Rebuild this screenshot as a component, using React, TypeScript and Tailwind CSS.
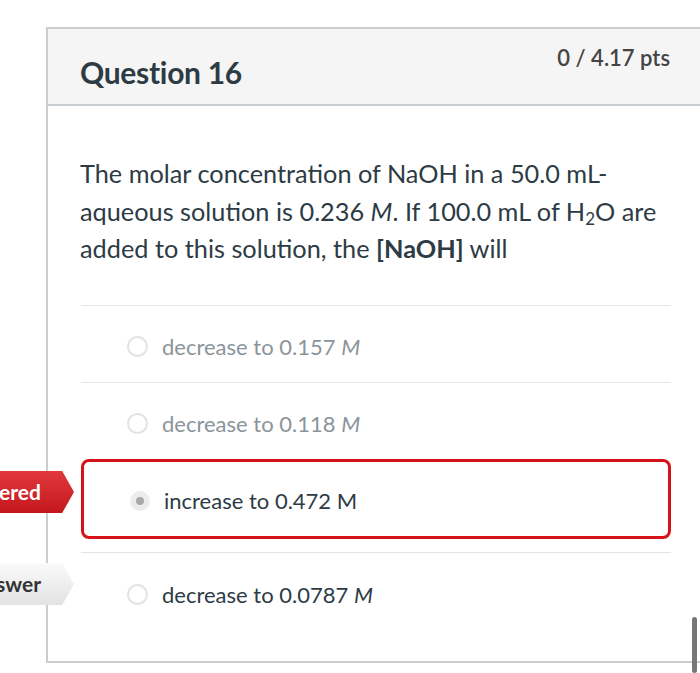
import React from 'react'

const answers = [
  { text: 'decrease to 0.157', muted: true },
  { text: 'decrease to 0.118', muted: true },
]

const Radio = ({ selected }: { selected?: boolean }) =>
  selected ? (
    <span className="flex h-[20px] w-[20px] items-center justify-center rounded-full bg-[#ececec]">
      <span className="h-[8px] w-[8px] rounded-full bg-[#a9a9a9]" />
    </span>
  ) : (
    <span className="h-[21px] w-[21px] rounded-full border-2 border-[#e2e2e2] bg-white" />
  )

const Tag = ({ label, red }: { label: string; red?: boolean }) => (
  <div
    className={
      'absolute left-0 flex h-[42px] w-[74px] items-center justify-end pr-[33px] text-[21px] font-bold [clip-path:polygon(0_0,84%_0,100%_50%,84%_100%,0_100%)] ' +
      (red
        ? 'bg-gradient-to-b from-[#e0383d] to-[#c3161c] text-white'
        : 'bg-gradient-to-b from-[#fafafa] to-[#e3e3e3] text-[#333]')
    }
  >
    <span className="whitespace-nowrap">{label}</span>
  </div>
)

export default function App() {
  return (
    <div className="relative h-[673px] w-[700px] overflow-hidden bg-white font-['Lato','Liberation_Sans',sans-serif] text-[#2d3b45]">
      <div className="ml-[46px] mt-[27px] h-[636px] w-[700px] border-l-2 border-t-2 border-b-2 border-[#c7cdd1]">
        <div className="flex h-[77px] items-start justify-between border-b-2 border-[#c7cdd1] bg-[#f5f5f5] pl-[32px] pr-[76px]">
          <h2 className="mt-[25px] text-[30px] font-bold leading-[36px] tracking-[-0.3px]">Question 16</h2>
          <span className="mt-[15px] text-[22px] font-semibold leading-[28px] text-[#444]">0 / 4.17 pts</span>
        </div>

        <div className="pl-[32px] pr-[30px] pt-[49px]">
          <p className="w-[592px] text-[25.3px] leading-[37.5px]">
            The molar concentration of NaOH in a 50.0 mL-aqueous solution is 0.236 <i>M</i>. If 100.0 mL of H
            <sub className="text-[17px]">2</sub>O are added to this solution, the <b>[NaOH]</b> will
          </p>

          <div className="mt-[37px] ml-[1px] w-[590px]">
            {answers.map((a) => (
              <div key={a.text} className="flex h-[77px] items-center gap-[14px] border-t border-[#e8e8e8] pl-[46px] pt-[5px]">
                <Radio />
                <span className="text-[22px] text-[#8b949a]">
                  {a.text} <i>M</i>
                </span>
              </div>
            ))}
            <div className="flex h-[80px] items-center gap-[14px] rounded-[8px] border-[3px] border-[#d7131a] pl-[46px] pt-[4px]">
              <Radio selected />
              <span className="text-[22px]">increase to 0.472 M</span>
            </div>
            <div className="mt-[13px] flex h-[84px] items-center gap-[14px] border-t border-[#e4e4e4] pl-[46px]">
              <Radio />
              <span className="text-[22px]">
                decrease to 0.0787 <i>M</i>
              </span>
            </div>
          </div>
        </div>
      </div>

      <div className="absolute left-0 top-[471px]">
        <Tag label="You Answered" red />
      </div>
      <div className="absolute left-0 top-[563px]">
        <Tag label="Correct Answer" />
      </div>

      <div className="absolute left-[692px] top-[617px] h-[56px] w-[5px] rounded-full bg-[#777]" />
    </div>
  )
}
